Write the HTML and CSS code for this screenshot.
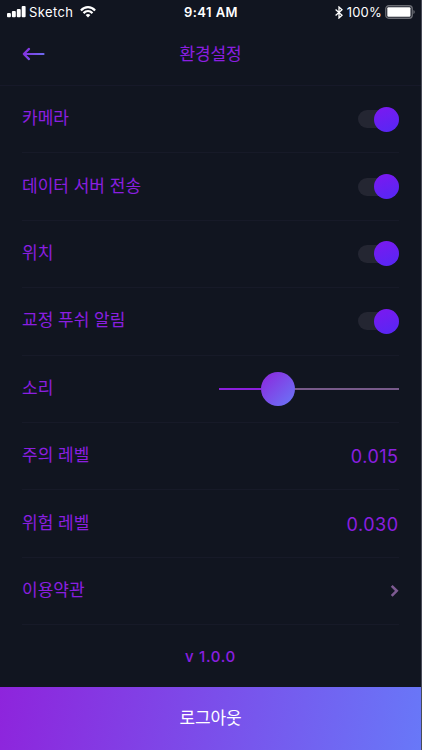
FILE: index.html
```html
<!DOCTYPE html>
<html lang="ko">
<head>
    <meta charset="UTF-8">
    <meta name="viewport" content="width=device-width, initial-scale=1.0">
    <title>환경설정</title>
    <link rel="stylesheet" href="styles.css">
</head>
<body>
    <div class="screen">
        <div class="status-bar">
            <div class="status-left">
                <svg width="19" height="12" viewBox="0 0 19 12" fill="#fff">
                    <rect x="0" y="7" width="3.9" height="4.2" rx="1"/>
                    <rect x="4.9" y="5" width="3.9" height="6.2" rx="1"/>
                    <rect x="9.8" y="3" width="3.9" height="8.2" rx="1"/>
                    <rect x="14.7" y="0" width="3.9" height="11.2" rx="1"/>
                </svg>
                <span class="carrier">Sketch</span>
                <svg class="wifi" width="16" height="12" viewBox="0 0 16 12" fill="none" stroke="#fff" stroke-width="2.2">
                    <path d="M0.9 4.4 C5 0.1 11 0.1 15.1 4.4"/>
                    <path d="M3.5 7.1 C6.2 4.5 9.8 4.5 12.5 7.1"/>
                    <path d="M5.6 9 Q8 7 10.4 9 L8 11.4 Z" fill="#fff" stroke="none"/>
                </svg>
            </div>
            <span class="time">9:41 AM</span>
            <div class="status-right">
                <svg width="8" height="13" viewBox="0 0 8 13" fill="none" stroke="#fff" stroke-width="1.3">
                    <path d="M0.6 3.6 L7 9.3 L4 12 V1 L7 3.7 L0.6 9.4"/>
                </svg>
                <span class="percent">100%</span>
                <svg width="30" height="14" viewBox="0 0 30 14">
                    <rect x="0.75" y="0.75" width="26.5" height="12.5" rx="3" fill="none" stroke="#6b6d74" stroke-width="1.3"/>
                    <rect x="2.3" y="2.3" width="23.2" height="9.4" rx="1" fill="#fff"/>
                    <path d="M28.4 5 Q29.8 5.5 29.8 7 Q29.8 8.5 28.4 9 Z" fill="#6b6d74"/>
                </svg>
            </div>
        </div>

        <div class="header">
            <svg class="back" width="23" height="14" viewBox="0 0 23 14" fill="none" stroke="url(#arrow)" stroke-width="2.2" stroke-linecap="round" stroke-linejoin="round">
                <defs>
                    <linearGradient id="arrow" gradientUnits="userSpaceOnUse" x1="0" y1="0" x2="23" y2="14">
                        <stop offset="0" stop-color="#8b24dc"/>
                        <stop offset="1" stop-color="#6878f5"/>
                    </linearGradient>
                </defs>
                <path d="M7 1.9 L1.8 7 L7 12.1 M1.8 7 H21.5"/>
            </svg>
            <h1>환경설정</h1>
        </div>

        <div class="settings">
            <div class="row">
                <span class="label">카메라</span>
                <div class="toggle"><div class="knob"></div></div>
            </div>
            <div class="row">
                <span class="label">데이터 서버 전송</span>
                <div class="toggle"><div class="knob"></div></div>
            </div>
            <div class="row">
                <span class="label">위치</span>
                <div class="toggle"><div class="knob"></div></div>
            </div>
            <div class="row">
                <span class="label">교정 푸쉬 알림</span>
                <div class="toggle"><div class="knob"></div></div>
            </div>
            <div class="row">
                <span class="label">소리</span>
                <div class="slider">
                    <div class="slider-fill"></div>
                    <div class="slider-thumb"></div>
                    <div class="slider-rest"></div>
                </div>
            </div>
            <div class="row">
                <span class="label">주의 레벨</span>
                <span class="value">0.015</span>
            </div>
            <div class="row">
                <span class="label">위험 레벨</span>
                <span class="value">0.030</span>
            </div>
            <div class="row">
                <span class="label">이용약관</span>
                <svg class="chevron" width="9" height="13" viewBox="0 0 9 13" fill="none" stroke="#7d5a91" stroke-width="2.6">
                    <path d="M1.7 1.8 L6.7 6.8 L1.7 11.8"/>
                </svg>
            </div>
        </div>

        <div class="version">v 1.0.0</div>
        <button class="logout" type="button">로그아웃</button>
    </div>
</body>
</html>
```

FILE: styles.css
```css
* {
    box-sizing: border-box;
}

body {
    margin: 0;
    background-color: #111520;
    font-family: Inter, 'Noto Sans CJK KR', sans-serif;
    color: #8b1fe0;
}

svg {
    display: block;
    flex: none;
}

.screen {
    display: flex;
    flex-direction: column;
    width: 422px;
    height: 750px;
    border-right: 1px solid #4a4c58;
    overflow: hidden;
}

.status-bar {
    display: grid;
    grid-template-columns: 1fr auto 1fr;
    align-items: center;
    height: 24px;
    padding: 0 6px 0 7px;
    color: #fff;
    font-size: 13px;
    line-height: 24px;
}

.status-left,
.status-right {
    display: flex;
    align-items: center;
}

.status-right {
    justify-content: flex-end;
}

.carrier {
    margin-left: 3px;
    letter-spacing: 0.4px;
}

.wifi {
    margin-left: 7px;
}

.time {
    font-weight: 600;
    letter-spacing: 0.45px;
}

.percent {
    margin: 0 3px 0 4px;
    letter-spacing: 0.2px;
}

.header {
    display: grid;
    grid-template-columns: 1fr auto 1fr;
    align-items: center;
    height: 62px;
    padding: 0 22px 1px 22px;
    border-bottom: 1px solid #171929;
}

.header h1 {
    margin: 0;
    font-size: 17px;
    font-weight: 400;
    line-height: 24px;
    letter-spacing: -0.1px;
}

.settings {
    padding: 0 22px 0 22px;
}

.row {
    display: flex;
    align-items: center;
    justify-content: space-between;
    height: 67.4px;
    border-bottom: 1px solid #171a28;
}

.label {
    padding-bottom: 2px;
    font-size: 17px;
    line-height: 24px;
}

.toggle {
    display: flex;
    align-items: center;
    justify-content: flex-end;
    width: 41px;
    height: 18px;
    border-radius: 9px;
    background-color: #242632;
}

.knob {
    width: 25px;
    height: 25px;
    flex: none;
    border-radius: 50%;
    background: linear-gradient(160deg, #7d18f0, #5428f4);
}

.slider {
    display: flex;
    align-items: center;
    width: 180px;
}

.slider-fill {
    width: 42px;
    height: 2px;
    background-color: #8b1fdc;
}

.slider-thumb {
    width: 34px;
    height: 34px;
    border-radius: 50%;
    background: linear-gradient(135deg, #8e24dc, #6878f8);
}

.slider-rest {
    flex: 1;
    height: 2px;
    background-color: #785a8a;
}

.value {
    padding: 2px 0.5px 0 0;
    font-size: 18px;
    line-height: 24px;
    letter-spacing: 0.5px;
}

.version {
    display: flex;
    align-items: center;
    justify-content: center;
    flex: 1;
    padding-top: 1px;
    font-size: 15px;
    font-weight: 500;
    letter-spacing: 0.7px;
}

.logout {
    height: 63px;
    padding: 0 0 4px;
    border: 0;
    background: linear-gradient(100deg, #8e24dc, #6878f8);
    color: #fff;
    font-family: inherit;
    font-size: 17px;
    letter-spacing: -0.1px;
}
```
